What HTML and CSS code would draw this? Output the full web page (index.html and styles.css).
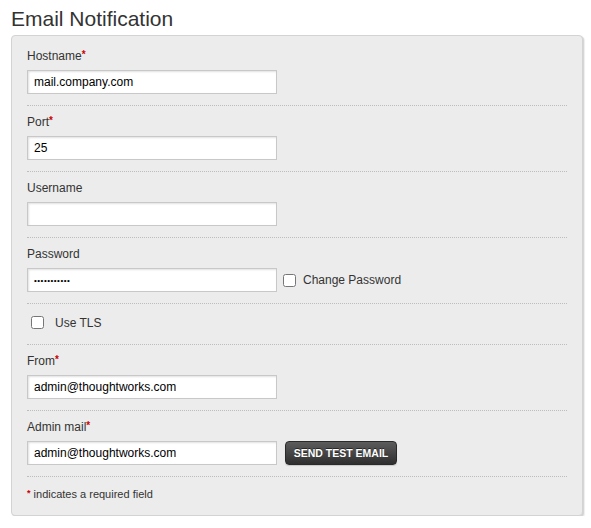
FILE: index.html
```html
<!DOCTYPE html>
<html>
<head>
<meta charset="utf-8">
<link rel="stylesheet" href="styles.css">
</head>
<body>
<div class="page">
  <h1 class="title">Email Notification</h1>
  <form class="panel">
    <div class="row">
      <label class="label">Hostname<span class="req">*</span></label>
      <input class="field" type="text" value="mail.company.com">
    </div>
    <div class="row">
      <label class="label">Port<span class="req">*</span></label>
      <input class="field" type="text" value="25">
    </div>
    <div class="row">
      <label class="label">Username</label>
      <input class="field" type="text" value="">
    </div>
    <div class="row">
      <label class="label">Password</label>
      <div class="inline">
        <input class="field pw" type="password" value="aaaaaaaaaaa">
        <label class="check check-change"><input type="checkbox" class="box"><span>Change Password</span></label>
      </div>
    </div>
    <div class="row row-tls">
      <label class="check check-tls"><input type="checkbox" class="box"><span>Use TLS</span></label>
    </div>
    <div class="row">
      <label class="label">From<span class="req">*</span></label>
      <input class="field" type="text" value="admin@thoughtworks.com">
    </div>
    <div class="row">
      <label class="label">Admin mail<span class="req">*</span></label>
      <div class="inline">
        <input class="field" type="text" value="admin@thoughtworks.com">
        <button type="button" class="btn">SEND TEST EMAIL</button>
      </div>
    </div>
    <div class="foot"><span class="req">*</span> indicates a required field</div>
  </form>
</div>
</body>
</html>
```

FILE: styles.css
```css
html, body {
  margin: 0;
  padding: 0;
  background: #ffffff;
}
body {
  font-family: "Liberation Sans", Arial, Helvetica, sans-serif;
  color: #333333;
}
.page {
  padding: 7px 0 0 11px;
}
.title {
  margin: 0 0 4px 0;
  font-size: 21px;
  line-height: 24px;
  font-weight: normal;
  color: #333333;
}
.panel {
  width: 540px;
  padding: 4px 15px 13px 15px;
  background: #ececec;
  border: 1px solid #d3d3d3;
  border-radius: 4px;
  box-shadow: 1px 1px 1px rgba(0,0,0,0.12), 2px 2px 1px rgba(0,0,0,0.06);
  display: flex;
  flex-direction: column;
}
.row {
  display: flex;
  flex-direction: column;
  gap: 6px;
  padding: 8px 0 11px 0;
  border-bottom: 1px dotted #bdbdbd;
}
.label {
  display: block;
  height: 16px;
  font-size: 12px;
  line-height: 16px;
  color: #333333;
}
.req {
  color: #cc0000;
  font-weight: bold;
  font-size: 10px;
  line-height: 0;
  vertical-align: 2px;
}
.field {
  box-sizing: border-box;
  width: 250px;
  height: 24px;
  margin: 0;
  padding: 0 6px;
  border: 1px solid #c8c8c8;
  background: #ffffff;
  box-shadow: inset 1px 1px 2px rgba(0,0,0,0.12);
  font-family: "Liberation Sans", Arial, sans-serif;
  font-size: 12px;
  color: #000000;
  outline: none;
}
.pw {
  font-size: 8px;
  letter-spacing: 0.5px;
}
.inline {
  display: flex;
  align-items: center;
}
.check {
  display: flex;
  align-items: center;
  font-size: 12px;
  line-height: 16px;
  color: #333333;
}
.box {
  width: 13px;
  height: 13px;
  margin: 0;
}
.check-change {
  margin-left: 6px;
  gap: 7px;
}
.row-tls {
  height: 21px;
  padding-left: 4px;
  justify-content: center;
}
.check-tls {
  gap: 11px;
}
.btn {
  box-sizing: border-box;
  margin-left: 8px;
  width: 112px;
  height: 24px;
  padding: 0;
  border: 1px solid #2a2a2a;
  border-radius: 4px;
  background: linear-gradient(#5c5c5c, #2f2f2f);
  color: #ffffff;
  font-family: "Liberation Sans", Arial, sans-serif;
  font-weight: bold;
  font-size: 10.5px;
  text-shadow: 0 -1px 0 rgba(0,0,0,0.5);
  box-shadow: 0 1px 1px rgba(0,0,0,0.15);
}
.foot {
  padding-top: 9px;
  height: 16px;
  font-size: 11px;
  line-height: 16px;
  color: #333333;
}
.foot .req {
  font-size: 9px;
}
```
